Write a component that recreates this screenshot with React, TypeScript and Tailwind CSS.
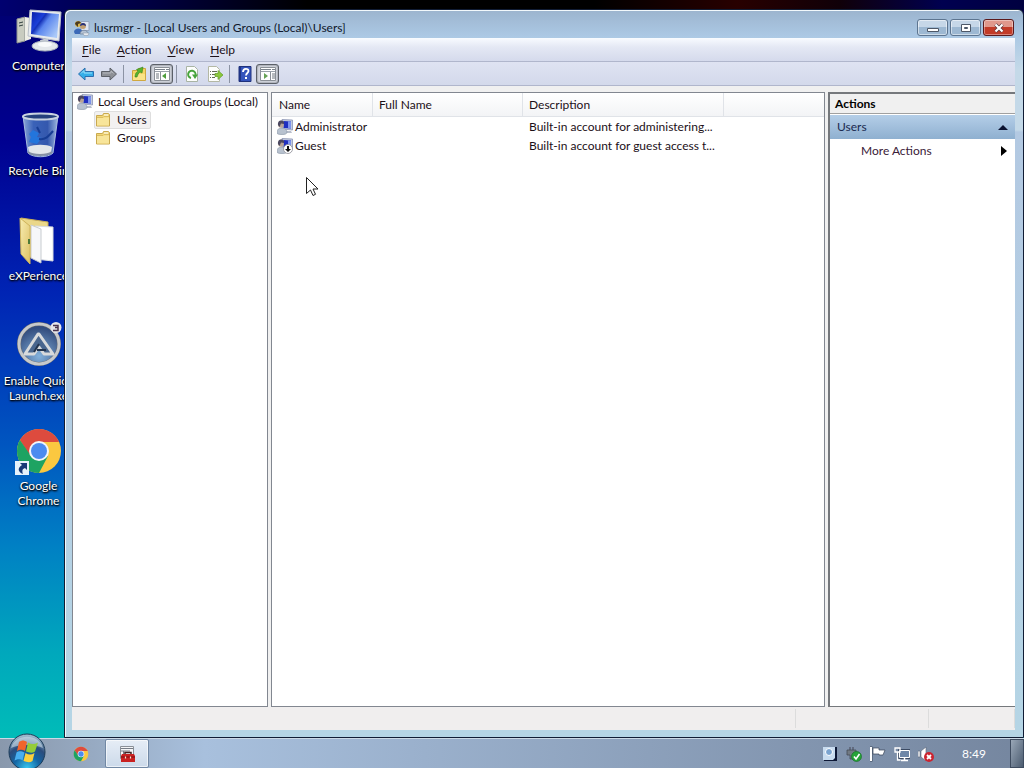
import type { ReactNode } from "react";

interface IconProps {
  className?: string;
}

const ComputerIcon = ({ className }: IconProps) => (
  <svg viewBox="0 0 48 48" className={className} aria-hidden="true">
    <defs>
      <linearGradient id="screen" x1="0" y1="0" x2="1" y2="0.7">
        <stop offset="0" stopColor="#0a1fa8" />
        <stop offset="0.35" stopColor="#1c3fd8" />
        <stop offset="0.4" stopColor="#1430b8" />
        <stop offset="0.55" stopColor="#5b86ee" />
        <stop offset="1" stopColor="#a9c8f8" />
      </linearGradient>
    </defs>
    <path d="M2 12l8-2v24l-8 2z" fill="#c9ccc0" stroke="#8d9290" />
    <path d="M10 10l6 1v21l-6 2z" fill="#eeeee6" />
    <path d="M4 16l4-1M4 19l4-1" stroke="#33413f" />
    <path d="M25 33l8-2 1 8-7 2z" fill="#cfd5dc" />
    <ellipse cx="30" cy="39" rx="13" ry="5" fill="#e4e8ec" stroke="#aab2bc" />
    <ellipse cx="30" cy="37.500" rx="7" ry="2.500" fill="#f8fafb" />
    <path d="M15 3l31 2-2 29-31-5z" fill="#e8ebee" stroke="#b8bfc8" />
    <path d="M17 5l27 2-2 24-26-4z" fill="url(#screen)" />
  </svg>
);

const RecycleBinIcon = ({ className }: IconProps) => (
  <svg viewBox="0 0 48 48" className={className} aria-hidden="true">
    <defs>
      <linearGradient id="bin" x1="0" y1="0" x2="1" y2="0">
        <stop offset="0" stopColor="#8aa6d8" />
        <stop offset="0.3" stopColor="#3a62b8" />
        <stop offset="0.7" stopColor="#3458ae" />
        <stop offset="1" stopColor="#9fb8e0" />
      </linearGradient>
    </defs>
    <path d="M8 4h35l-5 37c-5 5-20 5-25 0z" fill="url(#bin)" stroke="#a8bde0" />
    <path d="M13 35c6-3 19-3 24 0l-1 6c-5 4-17 4-22 0z" fill="#e3e6ea" />
    <path d="M13 40c5 4 19 4 24 0" fill="none" stroke="#8690a4" strokeWidth="2" />
    <ellipse cx="25.500" cy="4.500" rx="17.500" ry="3" fill="#24407c" stroke="#c8d2e0" strokeWidth="2" />
    <path d="M18 18l6 3-2 4 5 1-5 6-8-2 2-5-2-3z" fill="#2375dc" />
    <path d="M24 27c6 1 9-2 14-8M22 15l3 6" fill="none" stroke="#173d94" strokeWidth="2" />
  </svg>
);

const FolderOpenIcon = ({ className }: IconProps) => (
  <svg viewBox="0 0 48 48" className={className} aria-hidden="true">
    <defs>
      <linearGradient id="flap" x1="0" y1="0" x2="1" y2="1">
        <stop offset="0" stopColor="#f8edb0" />
        <stop offset="1" stopColor="#dcc065" />
      </linearGradient>
    </defs>
    <path d="M6 1l27 4v35H12z" fill="#ead789" stroke="#c9ae57" />
    <path d="M20 9l18 1v34l-18-2z" fill="#fff" stroke="#d8dce0" />
    <path d="M16 8l10 4v34l-10-5z" fill="#f6f7f9" stroke="#c8ccd0" />
    <path d="M5 1l10 8v38l-9-10z" fill="url(#flap)" stroke="#cfb45c" />
    <path d="M14 22v5" stroke="#4d7a38" strokeWidth="2" />
  </svg>
);

const AutoItIcon = ({ className }: IconProps) => (
  <svg viewBox="0 0 48 48" className={className} aria-hidden="true">
    <defs>
      <radialGradient id="disc" cx="0.5" cy="0.8" r="0.7">
        <stop offset="0" stopColor="#83b1dc" />
        <stop offset="1" stopColor="#334d7e" />
      </radialGradient>
    </defs>
    <circle cx="24" cy="22" r="20" fill="url(#disc)" stroke="#65686d" strokeWidth="4" />
    <circle cx="24" cy="22" r="20" fill="none" stroke="#c6c9cc" strokeWidth="3" />
    <path
      d="M24 12L38 32h-9l-5-7-5 7h-9L23 12z"
      fill="#49668e"
      stroke="#d8dadc"
      strokeWidth="3"
      strokeLinejoin="round"
    />
    <path d="M22 28h9M24 22l-5 8" stroke="#22344e" strokeWidth="2" />
    <circle cx="41" cy="5.500" r="5.500" fill="#e6e6ea" />
    <path d="M38 3.500h5v2h-3 3v3h-5" fill="none" stroke="#49344e" strokeWidth="1.500" />
  </svg>
);

const ChromeIcon = ({ className }: IconProps) => (
  <svg viewBox="0 0 48 48" className={className} aria-hidden="true">
    <circle cx="24" cy="24" r="22" fill="#fbc840" />
    <path d="M4.950 13A22 22 0 0 1 43.050 13L44 15H24L15 29z" fill="#dd4b3e" />
    <path d="M4.950 13A22 22 0 0 0 24 46l9-17-9 4-8-4z" fill="#1ea362" />
    <circle cx="24" cy="24" r="10" fill="#f3f5fa" />
    <circle cx="24" cy="24" r="8" fill="#4c8bf0" />
  </svg>
);

const ShortcutBadge = () => (
  <svg viewBox="0 0 14 14" className="absolute bottom-0 left-0 size-3.5" aria-hidden="true">
    <path d="M0 0h14v14H0z" fill="#e5f2fb" />
    <path d="M5 2h7v7L10 7c-3 1-3 3-2 6-5-2-6-6-1-9z" fill="#173a78" />
  </svg>
);

const UserComputerIcon = ({ className, disabled }: IconProps & { disabled?: boolean }) => (
  <svg viewBox="0 0 16 16" className={className} aria-hidden="true">
    <path d="M5 .5l10.500.5v10L5 10z" fill="#c4cce0" stroke="#8d96b4" strokeWidth="0.800" />
    <path d="M6.500 2l7.500.5v7L6.500 9z" fill="#1f2fc0" />
    <path d="M11 2.300l3 .2v7l-3-.2z" fill="#7c93ec" />
    <path d="M8 12h6l1 2H8z" fill="#b9bfcc" />
    <path d="M0 14c0-4 2-5 5-5s5 2 5 4-2 2.500-5 2.500S0 15 0 14z" fill="#b8c2cf" stroke="#8793a4" strokeWidth="0.600" />
    <circle cx="4" cy="6" r="2.800" fill="#b8a494" />
    <path d="M1 6c-.5-4 2-5 4-4.500S7.500 3 7 5L4 4.500 2.500 8z" fill="#4c4860" />
    {disabled && (
      <>
        <circle cx="11" cy="11" r="4.500" fill="#fff" stroke="#8d8d95" strokeWidth="0.800" />
        <path d="M10 8h2v3h2l-3 3-3-3h2z" fill="#111" />
      </>
    )}
  </svg>
);

const GroupIcon = ({ className }: IconProps) => (
  <svg viewBox="0 0 16 16" className={className} aria-hidden="true">
    <path d="M7 1.500h8v9H7z" fill="#dfe6f3" stroke="#98a6be" />
    <circle cx="4" cy="4" r="3" fill="#d8b54a" />
    <path d="M1 4c0-3 5-4 6-1L4 4v3z" fill="#4b3b20" />
    <circle cx="9" cy="6" r="3" fill="#c5a070" />
    <path d="M6 6c0-4 6-4 6 0L9 5z" fill="#25307c" />
    <path d="M0 12c0-4 7-5 8-1l-2 3H1z" fill="#3b69b8" />
    <path d="M6 14c0-5 8-5 8 0z" fill="#b4c2d4" stroke="#60728c" strokeWidth="0.600" />
    <path d="M9 13h6l-1 2.500h-4z" fill="#e8ecf0" stroke="#8a94a4" strokeWidth="0.500" />
  </svg>
);

const FolderIcon = ({ className }: IconProps) => (
  <svg viewBox="0 0 16 16" className={className} aria-hidden="true">
    <path d="M1.500 3.500h6l1-2h5l1 1v11.500h-13z" fill="#f1d777" stroke="#c9a94f" />
    <path d="M9 3h4" stroke="#fff" />
    <path d="M2 5.500h12v8H2z" fill="#f8e59a" />
    <path d="M2 5.500h6l1-1h5" fill="none" stroke="#dcbd60" />
  </svg>
);

const BackIcon = () => (
  <svg viewBox="0 0 16 16" className="size-4" aria-hidden="true">
    <path d="M.5 8L7 2v3.500h8.500v5H7V14z" fill="#35aee8" stroke="#2b6fae" />
    <path d="M3 7.500l3-3V7h8" fill="none" stroke="#9be0fa" />
  </svg>
);

const ForwardIcon = () => (
  <svg viewBox="0 0 16 16" className="size-4" aria-hidden="true">
    <path d="M15.500 8L9 2v3.500H.5v5H9V14z" fill="#8d9096" stroke="#5c6068" />
    <path d="M2 7h8V5l2.500 2.500" fill="none" stroke="#b5b8be" />
  </svg>
);

const UpFolderIcon = () => (
  <svg viewBox="0 0 16 16" className="size-4" aria-hidden="true">
    <path d="M1.500 4.500h5l1-2h7v12h-13z" fill="#f5d565" stroke="#d0a840" />
    <path d="M2 8h12v6H2z" fill="#fbe388" />
    <path d="M4 11c0-4 2-5 3-6L5.500 3.500 12 1l-1 6-2-1c-2 1-2 3-3 5z" fill="#58b32c" stroke="#37801c" strokeWidth="0.600" />
  </svg>
);

const PaneIcon = ({ flip }: { flip?: boolean }) => (
  <svg viewBox="0 0 16 16" className="size-4" aria-hidden="true">
    <path d="M.5 1.500h15v13H.5z" fill="#fff" stroke="#8b9097" />
    <path d="M1 3.500h10M12 3.500h3" stroke="#7a828c" />
    <path d="M1 5.500h14" stroke="#9ba2aa" />
    {flip ? (
      <>
        <path d="M10.500 6v8" stroke="#8b9097" />
        <path d="M12 8h3M12 10h3M12 12h3" stroke="#6e767e" />
        <path d="M4 7l4 3-4 3z" fill="#67a356" />
      </>
    ) : (
      <>
        <path d="M6.500 6v8" stroke="#8b9097" />
        <path d="M2 8h3M2 10h3M2 12h3" stroke="#6e767e" />
        <path d="M12 7l-4 3 4 3z" fill="#4f9e3c" />
      </>
    )}
  </svg>
);

const RefreshIcon = () => (
  <svg viewBox="0 0 16 16" className="size-4" aria-hidden="true">
    <path d="M2.500.5h8l3 3v12h-11z" fill="#fdfefc" stroke="#a9b4a4" />
    <path d="M7 12A3.700 3.700 0 1 1 11.500 9" fill="none" stroke="#46a43c" strokeWidth="2" />
    <path d="M8 8.500h6L11 13z" fill="#46a43c" />
  </svg>
);

const ExportIcon = () => (
  <svg viewBox="0 0 16 16" className="size-4" aria-hidden="true">
    <path d="M1.500.5h8l3 3v12h-11z" fill="#fdfefc" stroke="#b4b8a4" />
    <path d="M3 5.500h1M3 8.500h1M3 11.500h1M5 5.500h5M5 8.500h3M5 11.500h3" stroke="#5f6a55" />
    <path d="M8 7.500h3v-3l5 4.500-5 4.500v-3H8z" fill="#8bc83c" stroke="#5e9c28" strokeWidth="0.700" />
  </svg>
);

const HelpIcon = () => (
  <svg viewBox="0 0 16 16" className="size-4" aria-hidden="true">
    <path d="M2 .5h12v15H2z" fill="#3454bc" stroke="#20337c" />
    <path d="M2 1h2v14H2z" fill="#1f3486" />
    <path d="M6 6c0-4 5.500-4 5.500-1 0 2-2.500 2-2.500 4.500" fill="none" stroke="#fff" strokeWidth="1.800" />
    <path d="M8 11h2v2H8z" fill="#fff" />
  </svg>
);

const ToolboxIcon = ({ className }: IconProps) => (
  <svg viewBox="0 0 20 20" className={className} aria-hidden="true">
    <path d="M3.500 2.500h13v12h-13z" fill="#f3f4f6" stroke="#8a9098" />
    <path d="M4 4.500h12M4 7h9M6.500 7v7" stroke="#767c86" />
    <path d="M8 10V8.500h6V10" fill="none" stroke="#442020" strokeWidth="1.500" />
    <path d="M5 10h12l1 2v6H4v-6z" fill="#c92020" />
    <path d="M4 13h14" stroke="#7e0d10" />
    <path d="M8.500 12.500v2M13.500 12.500v2" stroke="#f8e8d0" strokeWidth="1.200" />
  </svg>
);

const StartOrb = () => (
  <svg viewBox="0 0 38 38" className="size-[38px]" aria-hidden="true">
    <defs>
      <radialGradient id="orb" cx="0.5" cy="0.95" r="0.9">
        <stop offset="0" stopColor="#38c8f0" />
        <stop offset="0.4" stopColor="#1466a4" />
        <stop offset="0.7" stopColor="#2b4c7c" />
        <stop offset="1" stopColor="#9cb8cc" />
      </radialGradient>
    </defs>
    <circle cx="19" cy="19" r="18" fill="url(#orb)" stroke="#1c3c58" />
    <path d="M3 15C7 0 31 0 35 15c-8-4-24-4-32 0z" fill="#d5e5ee" opacity="0.550" />
    <path d="M11 9c3-2 5-2 8 0l-2 9c-3-2-6-1-8 0z" fill="#f0642c" />
    <path d="M20 9.500c3 2 6 2 10 0l-3 9c-3 2-6 1-9 0z" fill="#94cc38" />
    <path d="M8.500 19.500c3-2 5-1 8 0l-2 8c-3-2-5-1-8 0z" fill="#48aef0" />
    <path d="M17.500 20c3 2 6 2 9 0l-2 8c-3 2-6 1-9 0z" fill="#fcd03c" />
  </svg>
);

const desktopItems: { label: string; icon: ReactNode }[] = [
  { label: "Computer", icon: <ComputerIcon className="size-12" /> },
  { label: "Recycle Bin", icon: <RecycleBinIcon className="size-12" /> },
  { label: "eXPerience", icon: <FolderOpenIcon className="size-12" /> },
  { label: "Enable Quick Launch.exe", icon: <AutoItIcon className="size-12" /> },
  {
    label: "Google Chrome",
    icon: (
      <>
        <ChromeIcon className="size-12" />
        <ShortcutBadge />
      </>
    ),
  },
];

const accounts = [
  { name: "Administrator", description: "Built-in account for administering...", disabled: false },
  { name: "Guest", description: "Built-in account for guest access t...", disabled: true },
];

const menus = ["File", "Action", "View", "Help"];

const ToolButton = ({ label, pressed, children }: { label: string; pressed?: boolean; children: ReactNode }) => (
  <button
    type="button"
    aria-label={label}
    aria-pressed={pressed}
    className={
      pressed
        ? "flex h-5 w-[23px] items-center justify-center rounded-[3px] border border-[#5b6068] bg-[#d3d6de] shadow-[inset_0_0_2px_#5b6068]"
        : "flex h-5 w-[23px] items-center justify-center"
    }
  >
    {children}
  </button>
);

const ToolDivider = () => <div className="mx-[3px] h-[18px] w-px bg-[#8c93a4]" />;

const Desktop = () => (
  <ul className="w-[77px] pt-[7px]">
    {desktopItems.map(({ label, icon }) => (
      <li key={label} className="h-[105px]">
        <button type="button" className="flex w-full flex-col items-center gap-[3px] text-white">
          <span className="relative">{icon}</span>
          <span className="leading-[15px] [text-shadow:1px_1px_2px_#000,0_1px_2px_#000]">{label}</span>
        </button>
      </li>
    ))}
  </ul>
);

const TitleBar = () => (
  <header className="flex h-7 items-center pt-[7px] pr-px pl-0.5">
    <GroupIcon className="size-4" />
    <h1 className="grow pl-1 text-[#10182c]">lusrmgr - [Local Users and Groups (Local)\Users]</h1>
    <div className="flex gap-0.5">
      <button
        type="button"
        aria-label="Minimize"
        className="flex h-[17px] w-[31px] items-center justify-center rounded-[3px] border border-[#5d7590] bg-linear-to-b from-[#c6d7e8] from-50% to-[#9db8d2] to-50% shadow-[inset_0_0_0_1px_#ffffff80]"
      >
        <svg viewBox="0 0 12 10" className="h-2.5 w-3" aria-hidden="true">
          <path d="M.5 5.500h11v3H.5z" fill="#fff" stroke="#4d5868" />
        </svg>
      </button>
      <button
        type="button"
        aria-label="Maximize"
        className="flex h-[17px] w-[31px] items-center justify-center rounded-[3px] border border-[#5d7590] bg-linear-to-b from-[#c6d7e8] from-50% to-[#9db8d2] to-50% shadow-[inset_0_0_0_1px_#ffffff80]"
      >
        <svg viewBox="0 0 12 10" className="h-2.5 w-3" aria-hidden="true">
          <path d="M1.500 1.500h9v7h-9z" fill="#fff" stroke="#4d5868" />
          <path d="M4.500 4.500h3v1h-3z" fill="#9db8d2" stroke="#4d5868" />
        </svg>
      </button>
      <button
        type="button"
        aria-label="Close"
        className="flex h-[17px] w-[31px] items-center justify-center rounded-[3px] border border-[#5c1a1c] bg-linear-to-b from-[#e0988c] from-50% to-[#c23b28] to-50% shadow-[inset_0_0_0_1px_#ffffff60]"
      >
        <svg viewBox="0 0 12 10" className="h-2.5 w-3" aria-hidden="true">
          <path d="M2.500 1.500l7 7M9.500 1.500l-7 7" stroke="#5a3a40" strokeWidth="3.600" />
          <path d="M2.500 1.500l7 7M9.500 1.500l-7 7" stroke="#fff" strokeWidth="2.200" />
        </svg>
      </button>
    </div>
  </header>
);

const MenuBar = () => (
  <nav className="flex h-6 items-center border-b border-[#b0b6cc] bg-linear-to-b from-[#f8fbff] via-[#e4e8f4] via-40% to-[#d5daec] pl-0.5">
    {menus.map((menu) => (
      <button key={menu} type="button" className="px-2">
        <span className="underline underline-offset-2">{menu[0]}</span>
        {menu.slice(1)}
      </button>
    ))}
  </nav>
);

const Toolbar = () => (
  <div className="flex h-6 items-center border-b border-[#b0b6cc] bg-linear-to-b from-[#dfe3f2] to-[#d3d9eb] pl-0.5">
    <ToolButton label="Back">
      <BackIcon />
    </ToolButton>
    <ToolButton label="Forward">
      <ForwardIcon />
    </ToolButton>
    <ToolDivider />
    <ToolButton label="Up one level">
      <UpFolderIcon />
    </ToolButton>
    <ToolButton label="Show or hide console tree" pressed>
      <PaneIcon />
    </ToolButton>
    <ToolDivider />
    <ToolButton label="Refresh">
      <RefreshIcon />
    </ToolButton>
    <ToolButton label="Export list">
      <ExportIcon />
    </ToolButton>
    <ToolDivider />
    <ToolButton label="Help topics">
      <HelpIcon />
    </ToolButton>
    <ToolButton label="Show or hide action pane" pressed>
      <PaneIcon flip />
    </ToolButton>
  </div>
);

const ConsoleTree = () => (
  <aside className="w-[196px] shrink-0 border border-[#828790] bg-white">
    <button type="button" className="flex h-[18px] items-center gap-[5px] pl-1 whitespace-nowrap">
      <UserComputerIcon className="size-4" />
      Local Users and Groups (Local)
    </button>
    <ul className="flex flex-col items-start pl-[21px]">
      <li>
        <button type="button" className="flex h-[18px] items-center gap-1.5 rounded-xs border border-[#dedede] bg-[#f2f1f1] pr-[3px]">
          <FolderIcon className="size-4" />
          Users
        </button>
      </li>
      <li>
        <button type="button" className="flex h-[18px] items-center gap-1.5 border border-transparent pr-[3px]">
          <FolderIcon className="size-4" />
          Groups
        </button>
      </li>
    </ul>
  </aside>
);

const AccountList = () => (
  <section className="min-w-0 grow border border-[#828790] bg-white">
    <table className="w-full table-fixed border-separate border-spacing-0 text-left">
      <colgroup>
        <col className="w-[101px]" />
        <col className="w-[150px]" />
        <col className="w-[201px]" />
        <col />
      </colgroup>
      <thead>
        <tr className="h-6">
          <th className="border-r border-b border-[#e0e3e8] bg-linear-to-b from-white to-[#f3f4f6] pl-[7px] font-normal">Name</th>
          <th className="border-r border-b border-[#e0e3e8] bg-linear-to-b from-white to-[#f3f4f6] pl-1.5 font-normal">Full Name</th>
          <th className="border-r border-b border-[#e0e3e8] bg-linear-to-b from-white to-[#f3f4f6] pl-1.5 font-normal">Description</th>
          <td className="border-b border-[#e0e3e8] bg-linear-to-b from-white to-[#f3f4f6]" />
        </tr>
      </thead>
      <tbody>
        {accounts.map((account) => (
          <tr key={account.name} className="h-[19px] whitespace-nowrap">
            <td className="pl-[5px]">
              <div className="flex items-center gap-0.5">
                <UserComputerIcon className="size-4 shrink-0" disabled={account.disabled} />
                {account.name}
              </div>
            </td>
            <td />
            <td className="pl-1.5">{account.description}</td>
            <td />
          </tr>
        ))}
      </tbody>
    </table>
  </section>
);

const ActionsPane = () => (
  <aside className="w-[187px] shrink-0 border-t-2 border-b border-l-2 border-[#75787c] bg-white">
    <h2 className="h-5 border-b border-[#a0a0a0] bg-[#f0f0f0] pl-[5px] leading-5 font-bold text-black">Actions</h2>
    <button
      type="button"
      className="mt-px flex h-6 w-full items-center justify-between bg-linear-to-b from-[#b4cee8] to-[#8fb0d0] px-[7px] text-[#1a2a50]"
    >
      Users
      <svg viewBox="0 0 10 5" className="h-[5px] w-2.5" aria-hidden="true">
        <path d="M5 0l5 5H0z" fill="#0a1230" />
      </svg>
    </button>
    <button type="button" className="flex h-6 w-full items-center justify-between pr-2 pl-[31px] text-[#3a2038]">
      More Actions
      <svg viewBox="0 0 6 10" className="h-2.5 w-1.5" aria-hidden="true">
        <path d="M0 0l6 5-6 5z" fill="#000" />
      </svg>
    </button>
  </aside>
);

const Taskbar = () => (
  <footer className="flex h-[30px] items-stretch border-t border-[#cbd9e6] bg-linear-to-r from-[#8998ac] via-[#a8c0dd] via-20% to-[#75869f] text-white">
    <div className="relative w-[61px] shrink-0">
      <button type="button" aria-label="Start" className="absolute -top-1.5 left-2">
        <StartOrb />
      </button>
    </div>
    <button type="button" aria-label="Google Chrome" className="flex w-10 items-center justify-center">
      <ChromeIcon className="size-4" />
    </button>
    <button
      type="button"
      aria-label="lusrmgr"
      className="ml-1 flex w-11 items-center justify-center rounded-xs border border-[#7188a4] bg-linear-to-b from-[#e6edf6] to-[#ccdaea] shadow-[inset_0_0_0_1px_#ffffff99]"
    >
      <ToolboxIcon className="size-5" />
    </button>
    <div className="grow" />
    <div className="flex items-center gap-2">
      <svg viewBox="0 0 16 16" className="size-4" aria-hidden="true">
        <path d="M2 1h13v14H2z" fill="#0d1836" />
        <path d="M1 1h12v11l-2 2H1z" fill="#c8dcf0" />
        <circle cx="7" cy="6" r="3.500" fill="#7ba4d0" stroke="#fff" />
      </svg>
      <svg viewBox="0 0 16 16" className="size-4" aria-hidden="true">
        <path d="M4 1v4M7 1v4" stroke="#445" />
        <path d="M1 4h9v5H7v4H4V9H1z" fill="#727a84" stroke="#454d56" strokeWidth="0.800" />
        <circle cx="10.500" cy="10.500" r="5" fill="#27a338" stroke="#106c20" strokeWidth="0.600" />
        <path d="M8 10.500l2 2.500 3.500-5" fill="none" stroke="#fff" strokeWidth="1.600" />
      </svg>
      <svg viewBox="0 0 16 16" className="size-4" aria-hidden="true">
        <path d="M1 .5v15" stroke="#384456" strokeWidth="3" />
        <path d="M1 1v14" stroke="#fff" strokeWidth="2" />
        <path d="M3 2h6v2h6l-2 5H9V8H3z" fill="#fff" stroke="#384456" strokeWidth="0.700" />
      </svg>
      <svg viewBox="0 0 16 16" className="size-4" aria-hidden="true">
        <path d="M5.500 4.500h10v7h-10z" fill="#6e87a8" stroke="#26344c" strokeWidth="2.500" />
        <path d="M5.500 4.500h10v7h-10z" fill="#6e87a8" stroke="#fff" />
        <path d="M10.500 12v2.500M7 14.500h7" stroke="#fff" strokeWidth="1.500" />
        <path d="M1 2h5v4H1zM3.500 6v8h3" fill="none" stroke="#fff" strokeWidth="1.300" />
      </svg>
      <svg viewBox="0 0 16 16" className="size-4" aria-hidden="true">
        <path d="M0 5h2v6H0zM3 5l5-4v14l-5-4z" fill="#fff" stroke="#5a6678" strokeWidth="0.600" />
        <circle cx="11" cy="11" r="5" fill="#cc2430" />
        <path d="M9 9l4 4M13 9l-4 4" stroke="#fff" strokeWidth="1.800" />
      </svg>
    </div>
    <time className="flex w-[76px] items-center justify-center pl-1">8:49</time>
    <button
      type="button"
      aria-label="Show desktop"
      className="w-3.5 border border-[#3e4c60] bg-linear-to-br from-[#9aa8b8] to-[#4c5c70]"
    />
  </footer>
);

const App = () => (
  <div className="flex h-screen flex-col overflow-hidden bg-[linear-gradient(#000070,#000090_18%,#0024b4_38%,#0056c0_58%,#0080c4_71%,#00a8bc_85%,#00bcb8_96%)] font-[Lato,'Open_Sans',sans-serif] text-[12px] leading-4 text-[#1c1018]">
    <main className="relative min-h-0 grow">
      <div className="absolute top-0 right-0 left-0 h-4 bg-[linear-gradient(90deg,#000070,#000040_15%,#000_30%,#000_58%,#280000_72%,#100008_82%,#000050_92%,#000040)]" />
      <div className="relative">
        <Desktop />
      </div>
      <section className="absolute top-[9px] right-0 bottom-0 left-16 flex flex-col rounded-t-md border border-[#101c34] bg-[linear-gradient(#9cb4ce,#abc8e4_26px,#c4d9e8_60px,#c4d9e8_120px,#b3c9e2_122px,#b5d5e5)] pr-2 pb-[7px] pl-[7px] shadow-[inset_1px_1px_0_#f2f8fc]">
        <TitleBar />
        <MenuBar />
        <Toolbar />
        <div className="flex min-h-0 grow gap-[3px] bg-[#f0f0f0] pt-1.5">
          <ConsoleTree />
          <AccountList />
          <ActionsPane />
        </div>
        <div className="flex h-[23px] bg-[#f0eeee] py-0.5">
          <div className="grow" />
          <div className="w-[133px] border-l border-[#dcdcdc]" />
          <div className="w-[87px] border-x border-[#dcdcdc]" />
        </div>
      </section>
      <svg viewBox="0 0 12 20" className="absolute top-[177px] left-[306px] h-5 w-3" aria-hidden="true">
        <path d="M.5.5v16l4-3.500 2.500 5.500 2.500-1.200L7 12h5z" fill="#fff" stroke="#222" />
      </svg>
    </main>
    <Taskbar />
  </div>
);

export default App;
